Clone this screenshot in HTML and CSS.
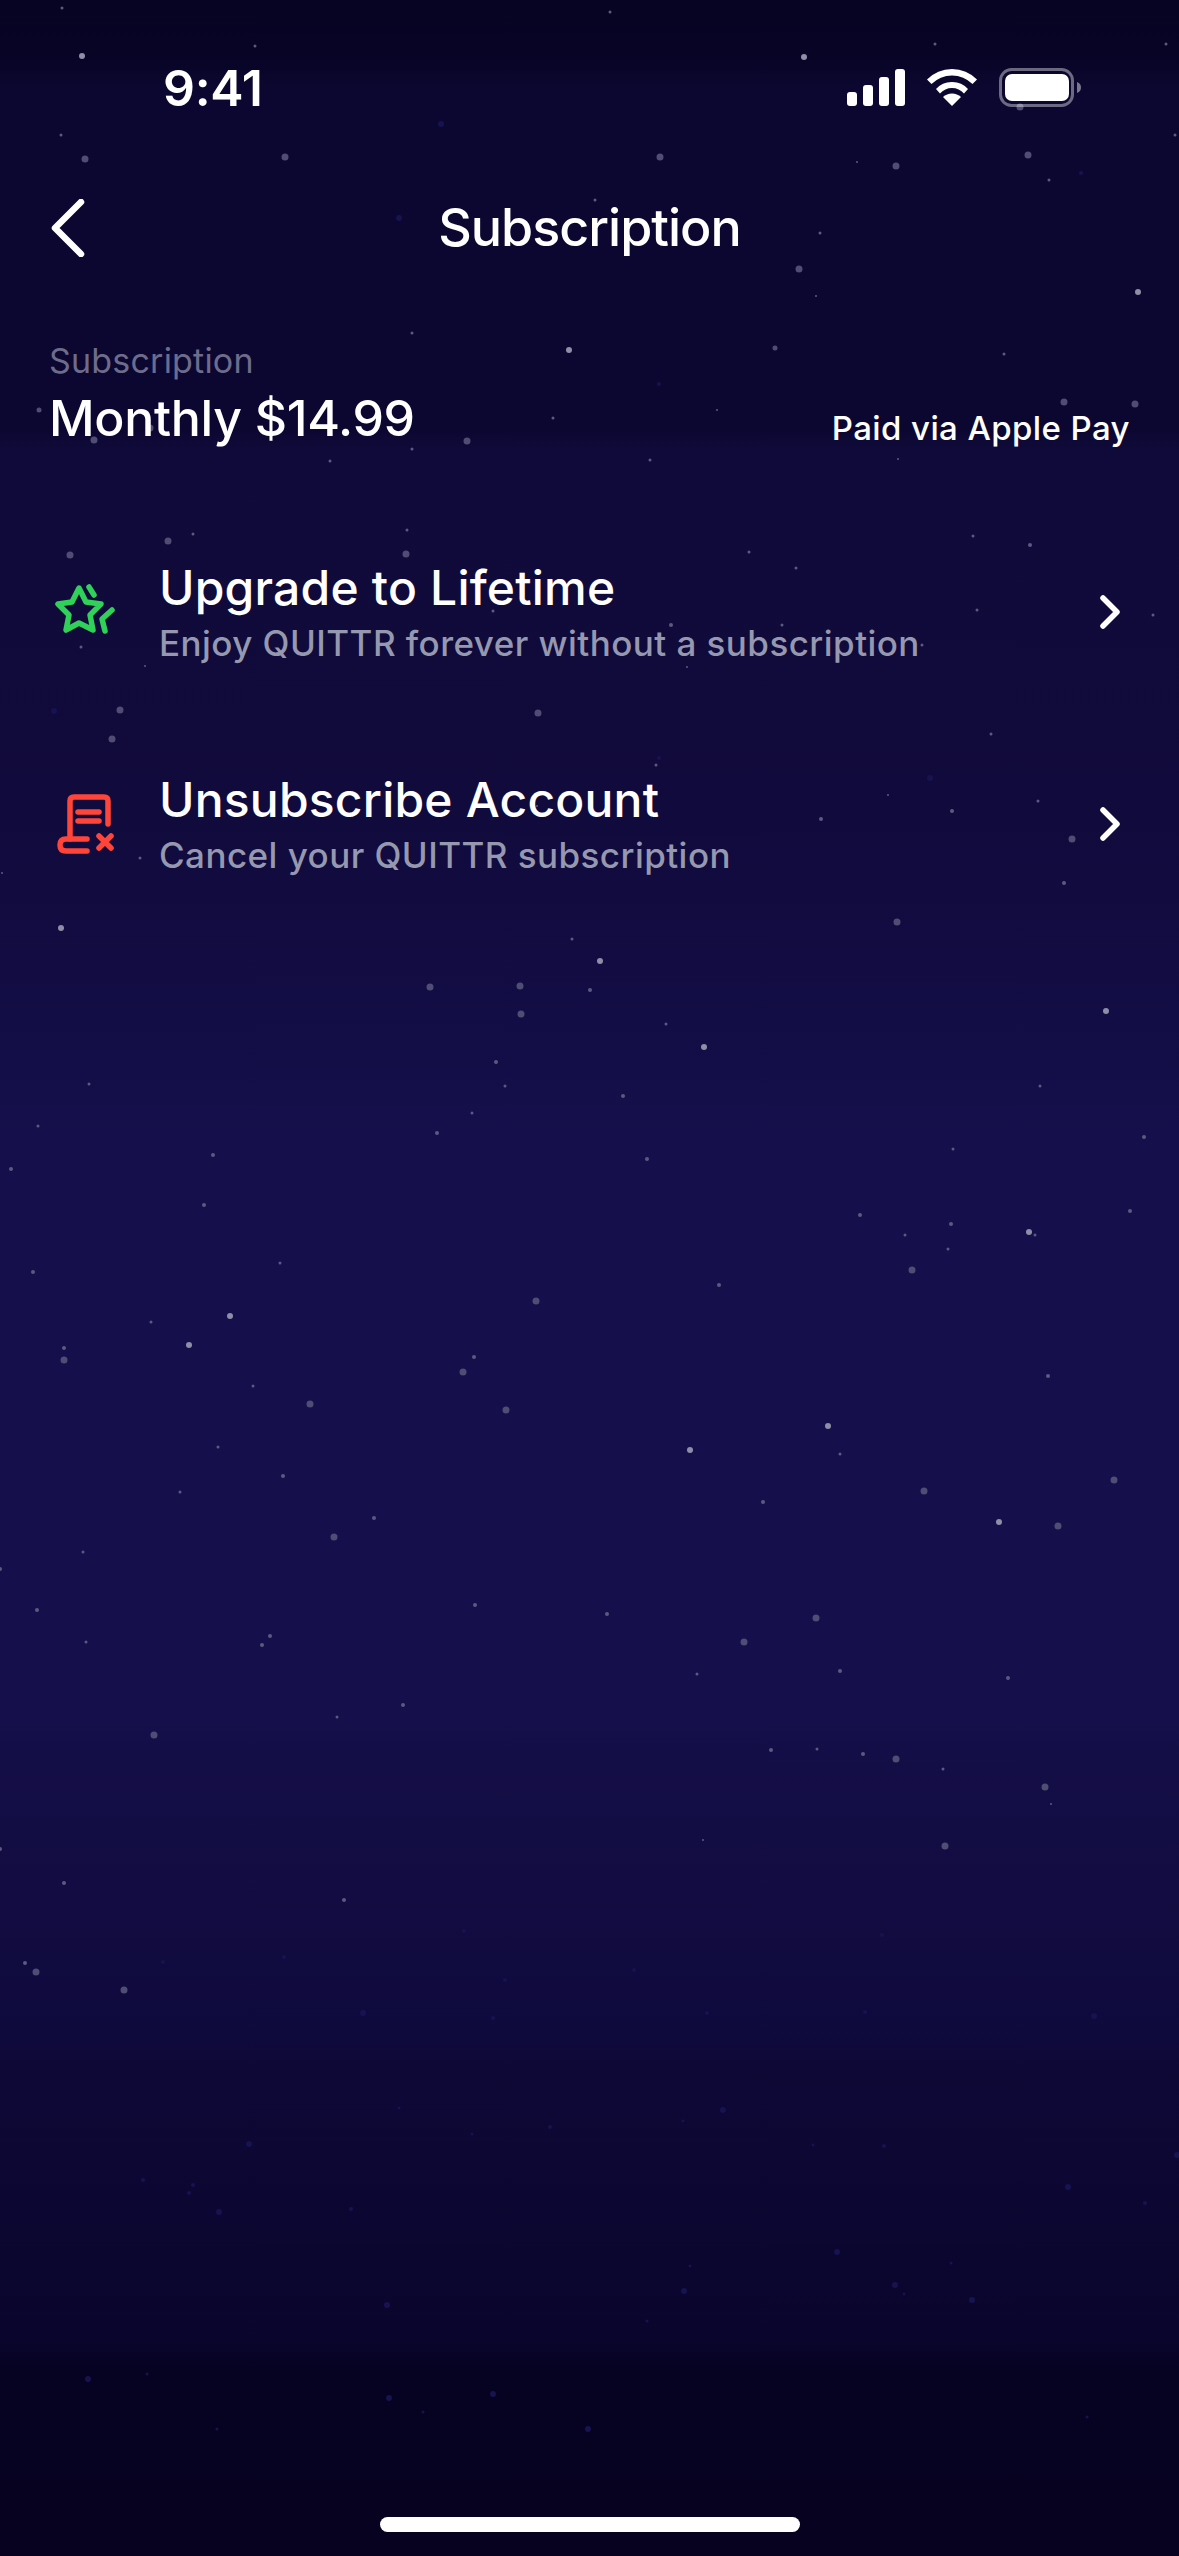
FILE: index.html
```html
<!DOCTYPE html>
<html lang="en">
    <head>
        <meta charset="UTF-8">
        <meta name="viewport" content="width=device-width, initial-scale=1.0">
        <title>Subscription</title>

        <link rel="stylesheet" href="styles.css">
    </head>
    <body>
        <!-- star field, each dot sits where it sits in the sky -->
        <svg class="stars" viewBox="0 0 1179 2556" aria-hidden="true">
            <g class="star-bright">
                <circle cx="82" cy="56" r="3"/><circle cx="804" cy="57" r="3"/><circle cx="1138" cy="292" r="3"/><circle cx="61" cy="928" r="3"/>
                <circle cx="600" cy="961" r="3"/><circle cx="1106" cy="1011" r="3"/><circle cx="704" cy="1047" r="3"/><circle cx="230" cy="1316" r="3"/>
                <circle cx="189" cy="1345" r="3"/><circle cx="828" cy="1426" r="3"/><circle cx="690" cy="1450" r="3"/><circle cx="1029" cy="1232" r="3"/>
                <circle cx="999" cy="1522" r="3"/><circle cx="569" cy="350" r="3"/>
            </g>
            <g class="star-mid">
                <circle cx="85" cy="159" r="3.500"/><circle cx="285" cy="157" r="3.500"/><circle cx="660" cy="157" r="3.500"/><circle cx="1028" cy="155" r="3.500"/>
                <circle cx="896" cy="166" r="3.500"/><circle cx="799" cy="269" r="3.500"/><circle cx="775" cy="348" r="2.500"/><circle cx="1064" cy="402" r="3.500"/>
                <circle cx="1135" cy="404" r="3.500"/><circle cx="467" cy="441" r="3.500"/><circle cx="94" cy="440" r="3.500"/><circle cx="150" cy="428" r="3.500"/>
                <circle cx="39" cy="410" r="2.500"/><circle cx="1020" cy="107" r="3.500"/><circle cx="168" cy="541" r="3.500"/><circle cx="70" cy="555" r="3.500"/>
                <circle cx="406" cy="554" r="3.500"/><circle cx="120" cy="710" r="3.500"/><circle cx="112" cy="739" r="3.500"/><circle cx="538" cy="713" r="3.500"/>
                <circle cx="1072" cy="839" r="3.500"/><circle cx="897" cy="922" r="3.500"/><circle cx="430" cy="987" r="3.500"/><circle cx="520" cy="986" r="3.500"/>
                <circle cx="521" cy="1014" r="3.500"/><circle cx="912" cy="1270" r="3.500"/><circle cx="536" cy="1301" r="3.500"/><circle cx="64" cy="1360" r="3.500"/>
                <circle cx="463" cy="1372" r="3.500"/><circle cx="310" cy="1404" r="3.500"/><circle cx="506" cy="1410" r="3.500"/><circle cx="1114" cy="1480" r="3.500"/>
                <circle cx="924" cy="1491" r="3.500"/><circle cx="1058" cy="1526" r="3.500"/><circle cx="334" cy="1537" r="3.500"/><circle cx="816" cy="1618" r="3.500"/>
                <circle cx="744" cy="1642" r="3.500"/><circle cx="154" cy="1735" r="3.500"/><circle cx="896" cy="1759" r="3.500"/><circle cx="1045" cy="1787" r="3.500"/>
                <circle cx="945" cy="1846" r="3.500"/><circle cx="36" cy="1972" r="3.500"/><circle cx="124" cy="1990" r="3.500"/>
            </g>
            <g class="star-small">
                <circle cx="62" cy="8" r="1.500"/><circle cx="610" cy="12" r="1.500"/><circle cx="255" cy="46" r="1.500"/><circle cx="935" cy="44" r="1.500"/>
                <circle cx="1166" cy="44" r="1.500"/><circle cx="61" cy="135" r="1.500"/><circle cx="1175" cy="135" r="1.500"/><circle cx="857" cy="162" r="1"/>
                <circle cx="1049" cy="180" r="1.500"/><circle cx="595" cy="200" r="1.500"/><circle cx="820" cy="233" r="1.500"/><circle cx="816" cy="296" r="1"/>
                <circle cx="412" cy="333" r="1.500"/><circle cx="1004" cy="354" r="1.500"/><circle cx="717" cy="410" r="1"/><circle cx="553" cy="418" r="1.500"/>
                <circle cx="412" cy="449" r="1.500"/><circle cx="330" cy="461" r="1.500"/><circle cx="650" cy="460" r="1.500"/><circle cx="898" cy="459" r="1"/>
                <circle cx="193" cy="534" r="1.500"/><circle cx="407" cy="530" r="1.500"/><circle cx="493" cy="611" r="1.500"/><circle cx="81" cy="647" r="1.500"/>
                <circle cx="145" cy="666" r="1"/><circle cx="140" cy="858" r="1.500"/><circle cx="2" cy="873" r="1"/><circle cx="537" cy="806" r="1"/>
                <circle cx="749" cy="552" r="1.500"/><circle cx="796" cy="568" r="1.500"/><circle cx="973" cy="536" r="1.500"/><circle cx="1030" cy="545" r="2"/>
                <circle cx="977" cy="610" r="1.500"/><circle cx="1153" cy="615" r="1.500"/><circle cx="671" cy="625" r="2"/><circle cx="782" cy="625" r="1.500"/>
                <circle cx="922" cy="645" r="1.500"/><circle cx="687" cy="667" r="1"/><circle cx="991" cy="734" r="1.500"/><circle cx="656" cy="765" r="1.500"/>
                <circle cx="888" cy="795" r="1"/><circle cx="821" cy="819" r="2"/><circle cx="952" cy="811" r="2"/><circle cx="1038" cy="801" r="1.500"/>
                <circle cx="1064" cy="883" r="2"/><circle cx="572" cy="939" r="1.500"/><circle cx="590" cy="990" r="2"/><circle cx="666" cy="1024" r="1.500"/>
                <circle cx="496" cy="1062" r="2"/><circle cx="505" cy="1086" r="1.500"/><circle cx="623" cy="1096" r="2"/><circle cx="89" cy="1084" r="1.500"/>
                <circle cx="1040" cy="1086" r="1.500"/><circle cx="472" cy="1113" r="1.500"/><circle cx="38" cy="1126" r="1.500"/><circle cx="437" cy="1133" r="2"/>
                <circle cx="1144" cy="1137" r="2"/><circle cx="953" cy="1149" r="1.500"/><circle cx="213" cy="1155" r="2"/><circle cx="647" cy="1159" r="2"/>
                <circle cx="11" cy="1169" r="2"/><circle cx="204" cy="1205" r="2"/><circle cx="1130" cy="1211" r="2"/><circle cx="860" cy="1215" r="2"/>
                <circle cx="951" cy="1224" r="2"/><circle cx="905" cy="1235" r="1.500"/><circle cx="1035" cy="1235" r="1.500"/><circle cx="948" cy="1249" r="1.500"/>
                <circle cx="280" cy="1263" r="1.500"/><circle cx="33" cy="1272" r="2"/><circle cx="719" cy="1285" r="2"/><circle cx="151" cy="1322" r="1.500"/>
                <circle cx="64" cy="1348" r="2"/><circle cx="474" cy="1357" r="2"/><circle cx="1048" cy="1376" r="2"/><circle cx="253" cy="1386" r="1.500"/>
                <circle cx="218" cy="1447" r="1.500"/><circle cx="840" cy="1454" r="1.500"/><circle cx="283" cy="1476" r="2"/><circle cx="180" cy="1492" r="1.500"/>
                <circle cx="763" cy="1502" r="2"/><circle cx="374" cy="1518" r="2"/><circle cx="83" cy="1552" r="1.500"/><circle cx="0" cy="1569" r="2"/>
                <circle cx="475" cy="1605" r="2"/><circle cx="37" cy="1610" r="2"/><circle cx="607" cy="1614" r="2"/><circle cx="86" cy="1642" r="1.500"/>
                <circle cx="270" cy="1636" r="2"/><circle cx="262" cy="1645" r="2"/><circle cx="697" cy="1674" r="1.500"/><circle cx="840" cy="1671" r="2"/>
                <circle cx="1008" cy="1678" r="2"/><circle cx="403" cy="1705" r="2"/><circle cx="337" cy="1717" r="1.500"/><circle cx="771" cy="1750" r="2"/>
                <circle cx="817" cy="1749" r="1.500"/><circle cx="863" cy="1754" r="2"/><circle cx="943" cy="1769" r="1.500"/><circle cx="1051" cy="1804" r="1"/>
                <circle cx="703" cy="1840" r="1"/><circle cx="0" cy="1849" r="2"/><circle cx="64" cy="1883" r="2"/><circle cx="344" cy="1900" r="2"/>
                <circle cx="25" cy="1963" r="2"/>
            </g>
            <g class="star-faint">
                <circle cx="441" cy="124" r="3"/><circle cx="399" cy="218" r="3"/><circle cx="659" cy="384" r="2"/><circle cx="1081" cy="173" r="2"/>
                <circle cx="54" cy="711" r="3"/><circle cx="930" cy="778" r="3"/><circle cx="659" cy="758" r="2"/><circle cx="163" cy="1962" r="2"/>
                <circle cx="284" cy="1957" r="2"/><circle cx="634" cy="1970" r="2"/><circle cx="505" cy="1980" r="2"/><circle cx="882" cy="1935" r="2"/>
                <circle cx="464" cy="1931" r="2"/><circle cx="363" cy="2013" r="3"/><circle cx="1094" cy="2016" r="3"/><circle cx="707" cy="2013" r="2"/>
                <circle cx="865" cy="2012" r="2"/><circle cx="493" cy="2018" r="2"/><circle cx="723" cy="2110" r="3"/><circle cx="249" cy="2144" r="3"/>
                <circle cx="1177" cy="2155" r="3"/><circle cx="683" cy="2121" r="1.500"/><circle cx="550" cy="2127" r="2"/><circle cx="399" cy="2108" r="1.500"/>
                <circle cx="472" cy="2134" r="1.500"/><circle cx="813" cy="2145" r="1.500"/><circle cx="884" cy="2146" r="2"/><circle cx="143" cy="2180" r="2"/>
                <circle cx="193" cy="2185" r="2"/><circle cx="189" cy="2193" r="2"/><circle cx="219" cy="2212" r="3"/><circle cx="351" cy="2209" r="2"/>
                <circle cx="1068" cy="2187" r="3"/><circle cx="1145" cy="2203" r="2"/><circle cx="837" cy="2252" r="3"/><circle cx="690" cy="2266" r="1.500"/>
                <circle cx="951" cy="2263" r="1.500"/><circle cx="684" cy="2291" r="3"/><circle cx="895" cy="2285" r="3"/><circle cx="904" cy="2294" r="1.500"/>
                <circle cx="972" cy="2300" r="3"/><circle cx="387" cy="2305" r="3"/><circle cx="647" cy="2321" r="1.500"/><circle cx="88" cy="2379" r="3"/>
                <circle cx="147" cy="2374" r="1.500"/><circle cx="389" cy="2398" r="3"/><circle cx="493" cy="2394" r="3"/><circle cx="588" cy="2429" r="3"/>
                <circle cx="423" cy="2412" r="1.500"/><circle cx="217" cy="2429" r="1.500"/><circle cx="1087" cy="2417" r="1.500"/>
            </g>
        </svg>

        <div class="tela">

            <div class="status-bar">
                <span class="hora">9:41</span>
                <div class="status-icones">
                    <svg class="ico-sinal" width="58" height="37" viewBox="0 0 58 37">
                        <rect x="0" y="23" width="10" height="14" rx="3"/>
                        <rect x="16" y="16" width="10" height="21" rx="3"/>
                        <rect x="32" y="8" width="10" height="29" rx="3"/>
                        <rect x="48" y="0" width="10" height="37" rx="3"/>
                    </svg>
                    <svg class="ico-wifi" width="50" height="37" viewBox="0 0 50 37">
                        <path d="M25 37 L16 28 A13 13 0 0 1 34 28 Z"/>
                        <path d="M25 13 A21 21 0 0 1 41 20 L37 24.500 A16 16 0 0 0 13 24.500 L9 20 A21 21 0 0 1 25 13 Z"/>
                        <path d="M25 0 A36 36 0 0 1 50 10.500 L45.500 15 A29 29 0 0 0 4.500 15 L0 10.500 A36 36 0 0 1 25 0 Z"/>
                    </svg>
                    <svg class="ico-bateria" width="82" height="39" viewBox="0 0 82 39">
                        <rect class="bateria-borda" x="1.500" y="1.500" width="72" height="36" rx="11"/>
                        <rect x="6" y="6" width="64" height="27" rx="7"/>
                        <path class="bateria-ponta" d="M78 14 C81 15 82 17 82 19.500 C82 22 81 24 78 25 Z"/>
                    </svg>
                </div>
            </div>

            <div class="topo">
                <svg class="voltar" width="34" height="58" viewBox="0 0 34 58">
                    <path d="M30 3 L4 29 L30 55"/>
                </svg>
                <h1>Subscription</h1>
            </div>

            <div class="plano">
                <div>
                    <div class="plano-rotulo">Subscription</div>
                    <div class="plano-valor">Monthly $14.99</div>
                </div>
                <div class="plano-pagamento">Paid via Apple Pay</div>
            </div>

            <div class="opcoes">
                <div class="opcao">
                    <svg class="opcao-ico ico-verde" width="66" height="66" viewBox="24 20 66 66">
                        <path d="M49 29 L56 43 L71 45 L60 56 L63 71 L49 64 L36 71 L39 56 L28 45 L42 43 Z"/>
                        <path d="M59 28 L64 36"/>
                        <path d="M82 51 L72 60 L75 72"/>
                    </svg>
                    <div class="opcao-texto">
                        <div class="opcao-titulo">Upgrade to Lifetime</div>
                        <div class="opcao-sub">Enjoy QUITTR forever without a subscription</div>
                    </div>
                    <svg class="seta" width="20" height="34" viewBox="0 0 20 34">
                        <path d="M3 3 L17 17 L3 31"/>
                    </svg>
                </div>

                <div class="opcao">
                    <svg class="opcao-ico ico-vermelho" width="66" height="66" viewBox="24 20 66 66">
                        <path d="M40 68 L40 30 Q40 26 44 26 L74 26 Q78 26 78 30 L78 53"/>
                        <path d="M48 41 L69 41"/>
                        <path d="M48 50 L69 50"/>
                        <path d="M57 68 L36 68 Q30 68 30 74 Q30 80 36 80 L57 80"/>
                        <path d="M69 65 L81 77"/>
                        <path d="M81 65 L69 77"/>
                    </svg>
                    <div class="opcao-texto">
                        <div class="opcao-titulo">Unsubscribe Account</div>
                        <div class="opcao-sub">Cancel your QUITTR subscription</div>
                    </div>
                    <svg class="seta" width="20" height="34" viewBox="0 0 20 34">
                        <path d="M3 3 L17 17 L3 31"/>
                    </svg>
                </div>
            </div>

            <div class="home-indicador"></div>

        </div>
    </body>
</html>
```

FILE: styles.css
```css
html, body{
    margin: 0;
    padding: 0;
}
body{
    position: relative;
    width: 1179px;
    height: 2556px;
    overflow: hidden;
    font-family: "Inter", "Liberation Sans", sans-serif;
    color: #FFFFFF;
    background: linear-gradient(180deg,
        #070322 0,
        #080426 55px,
        #0B0730 90px,
        #0C0731 430px,
        #100A3A 450px,
        #110A3C 800px,
        #120C42 950px,
        #150F4B 1130px,
        #150F4B 1720px,
        #130E45 1770px,
        #120C42 1900px,
        #0F0A3C 2040px,
        #0D0835 2070px,
        #0C0732 2200px,
        #0A052C 2340px,
        #060222 2370px,
        #060220 2556px);
}

/* ceu */
.stars{
    position: absolute;
    top: 0;
    left: 0;
    width: 1179px;
    height: 2556px;
}
.star-bright{
    fill: #8F8EA6;
}
.star-mid{
    fill: #4F4D73;
}
.star-small{
    fill: #5C5A80;
}
.star-faint{
    fill: #171350;
}

.tela{
    position: relative;
    display: flex;
    flex-direction: column;
    height: 100%;
}

/* barra de status */
.status-bar{
    display: flex;
    justify-content: space-between;
    align-items: center;
    height: 39px;
    margin-top: 68px;
    padding: 0 98px 0 163px;
}
.hora{
    font-size: 50px;
    font-weight: 600;
    letter-spacing: -0.3px;
}
.status-icones{
    display: flex;
    align-items: center;
    gap: 22px;
}
.status-icones svg{
    display: block;
    fill: #FFFFFF;
}
.status-icones .bateria-borda{
    fill: none;
    stroke: #FFFFFF;
    stroke-opacity: 0.4;
    stroke-width: 3;
}
.status-icones .bateria-ponta{
    fill: #FFFFFF;
    fill-opacity: 0.45;
}

/* titulo */
.topo{
    position: relative;
    display: flex;
    justify-content: center;
    align-items: center;
    height: 60px;
    margin-top: 90px;
}
.topo h1{
    margin: 0;
    font-size: 52px;
    font-weight: 500;
    letter-spacing: -1px;
}
.voltar{
    position: absolute;
    left: 51px;
    top: 2px;
    fill: none;
    stroke: #FFFFFF;
    stroke-width: 6.500;
    stroke-linecap: round;
    stroke-linejoin: round;
}

/* plano */
.plano{
    display: flex;
    justify-content: space-between;
    align-items: flex-end;
    margin-top: 84px;
    padding: 0 49px;
}
.plano-rotulo{
    font-size: 34px;
    line-height: 40px;
    letter-spacing: 0.2px;
    color: #6E6C8B;
}
.plano-valor{
    font-size: 50px;
    font-weight: 500;
    line-height: 60px;
    letter-spacing: -0.3px;
    margin-top: 7px;
}
.plano-pagamento{
    font-size: 33px;
    font-weight: 500;
    line-height: 40px;
    letter-spacing: 0.4px;
}

/* opcoes */
.opcoes{
    display: flex;
    flex-direction: column;
    gap: 92px;
    margin-top: 104px;
    padding: 0 59px 0 54px;
}
.opcao{
    display: flex;
    align-items: center;
    height: 120px;
}
.opcao-ico{
    flex: none;
    fill: none;
    stroke-width: 5.500;
    stroke-linecap: round;
    stroke-linejoin: round;
}
.ico-verde{
    stroke: #30D158;
}
.ico-vermelho{
    stroke: #FF453A;
}
.opcao-texto{
    flex: 1;
    margin-left: 39px;
}
.opcao-titulo{
    font-size: 48px;
    font-weight: 500;
    line-height: 56px;
    letter-spacing: 0.2px;
}
.opcao-sub{
    font-size: 35px;
    font-weight: 500;
    line-height: 44px;
    letter-spacing: 0.45px;
    margin-top: 5px;
    color: #9598AE;
}
.seta{
    flex: none;
    fill: none;
    stroke: #FFFFFF;
    stroke-width: 5.500;
    stroke-linecap: round;
    stroke-linejoin: round;
}

.home-indicador{
    width: 420px;
    height: 15px;
    margin: auto auto 24px;
    border-radius: 8px;
    background-color: #FFFFFF;
}
```
